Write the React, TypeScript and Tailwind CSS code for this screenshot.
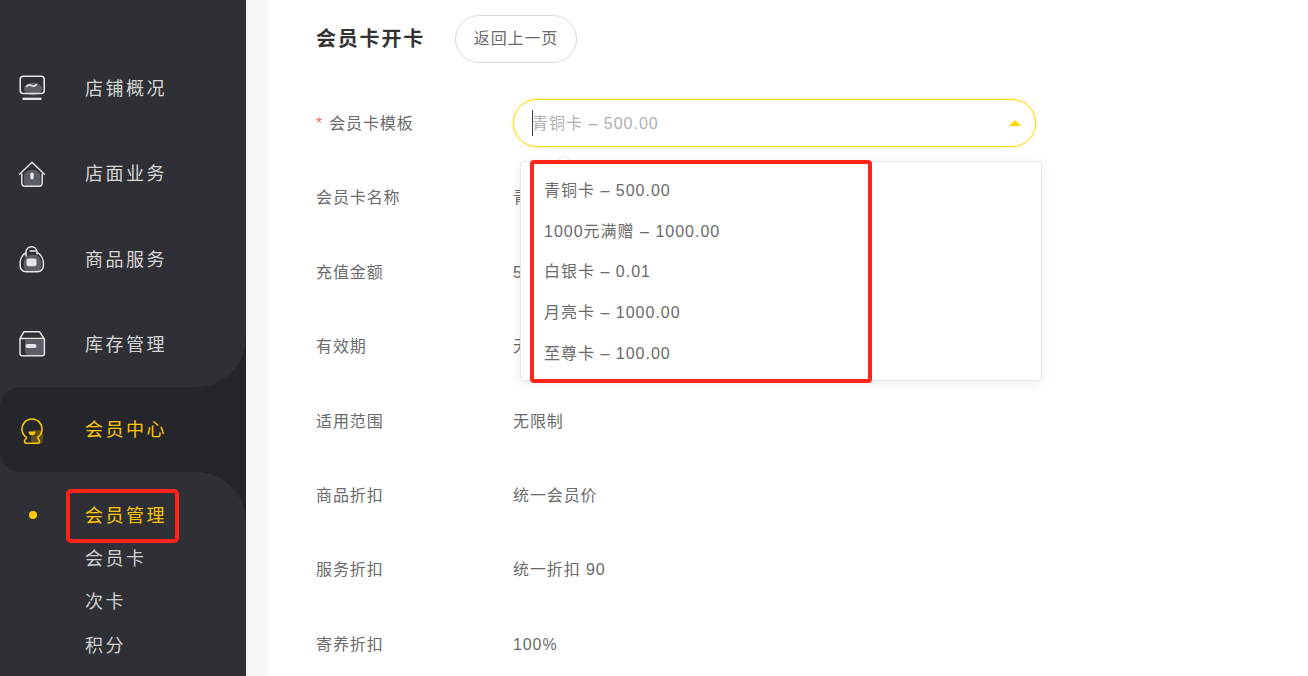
import React from "react";

const FONT = '"Liberation Sans","Noto Sans CJK SC",sans-serif';
const L = "#e4e4e6";
const B = "#5a5e66";

function Ic({ children }: { children: React.ReactNode }) {
  return (
    <svg width="28" height="28" viewBox="0 0 28 28" fill="none" className="shrink-0">
      {children}
    </svg>
  );
}

const icons: React.ReactNode[] = [
  <Ic key="a">
    <ellipse cx="14" cy="14" rx="9" ry="6.500" fill={B} />
    <rect x="1.200" y="1.200" width="24" height="17.300" rx="3" stroke={L} strokeWidth="1.600" />
    <path d="M7.500 11.500q2.200-2.600 4.800-1t5.200-.8" stroke={L} strokeWidth="1.600" strokeLinecap="round" />
    <path d="M3.500 23.800h19" stroke={L} strokeWidth="2.400" />
  </Ic>,
  <Ic key="b">
    <path d="M5 15c1-3 4-5 8-5s8 2 8.500 6v7c0 2-1 3-3 3H9c-3 0-4-2-4-4z" fill={B} />
    <path d="M.500 14.300 13 2.200l12.400 12.100" stroke={L} strokeWidth="1.500" strokeLinecap="round" strokeLinejoin="round" />
    <path d="M2.800 13.500v9c0 2 1.300 3.800 3.300 3.800h13.800c2 0 3.300-1.800 3.300-3.800v-9" stroke={L} strokeWidth="1.500" />
    <rect x="11.300" y="12.500" width="3.400" height="7" rx="1.700" fill={L} />
  </Ic>,
  <Ic key="c">
    <path d="M7 12c3-3 10-3 13 0s3 12 0 14H7c-3-1-3-11 0-14z" fill={B} />
    <path d="M6.500 8C3 10 1 15 1 19c0 5 2.500 7.800 6 7.800h11.500c3.500 0 6-2.800 6-7.800 0-4-2-9-5.500-11" stroke={L} strokeWidth="1.500" strokeLinecap="round" />
    <path d="M7 11V7.500C7 4 9.500 1.800 12.500 1.800S18 4 18 7.500V9M11 6h7" stroke={L} strokeWidth="1.500" strokeLinecap="round" />
    <rect x="7.500" y="13.500" width="10" height="7.800" rx="2" fill={L} />
  </Ic>,
  <Ic key="d">
    <path d="M6 10h19.500v15.500H10q-4-1-4-6z" fill={B} />
    <path d="M5 1.700h15.500L25 8.500H1zM1 8.500v15.500q0 1.700 1.700 1.700h21q1.700 0 1.700-1.700V8.500" stroke={L} strokeWidth="1.500" strokeLinejoin="round" />
    <rect x="6.500" y="14" width="11" height="4" rx="2" fill={L} />
  </Ic>,
  <Ic key="e">
    <rect x="12" y="14" width="12" height="14" rx="4" fill="#5d4c1f" />
    <path d="M7.500 21.300A10 10 0 1 1 18.500 21.300c0 2 2 2 2 4 0 1.500-1 2-2 2h-11c-1 0-2-.5-2-2 0-2 2-2 2-4z" stroke="#fec601" strokeWidth="1.600" strokeLinejoin="round" />
    <path d="M9.500 15.500h7c.3 2-1.500 3.800-3.500 3.800s-3.800-1.800-3.500-3.800z" fill="#fec601" />
  </Ic>,
];

const rows = [
  { name: "店铺概况", icon: 0 },
  { name: "店面业务", icon: 1 },
  { name: "商品服务", icon: 2 },
  { name: "库存管理", icon: 3 },
];

const fields: [string, string][] = [
  ["会员卡名称", "青铜卡"],
  ["充值金额", "500.00"],
  ["有效期", "无限期"],
  ["适用范围", "无限制"],
  ["商品折扣", "统一会员价"],
  ["服务折扣", "统一折扣 90"],
  ["寄养折扣", "100%"],
];

const options = ["青铜卡 – 500.00", "1000元满赠 – 1000.00", "白银卡 – 0.01", "月亮卡 – 1000.00", "至尊卡 – 100.00"];

function Sidebar() {
  return (
    <aside className="w-[246px] h-[676px] shrink-0 bg-[#25262b] flex flex-col overflow-hidden">
      <div className="bg-[#2f3035] rounded-br-[50px] pt-[46px]">
        {rows.map((r) => (
          <div key={r.name} className="h-[85.250px] flex items-center pl-[19px] gap-[38px]">
            {icons[r.icon]}
            <span className="text-[18px] tracking-[2.500px] text-[#d6d6d6] pt-[2px]">{r.name}</span>
          </div>
        ))}
      </div>
      <div className="bg-[#2f3035]">
        <div className="h-[85px] bg-[#25262b] rounded-l-[20px] flex items-center pl-[19px] gap-[38px]">
          {icons[4]}
          <span className="text-[18px] tracking-[2.500px] text-[#fec601] pt-[2px]">会员中心</span>
        </div>
      </div>
      <div className="flex-1 bg-[#2f3035] rounded-tr-[50px] pt-[21px]">
        <div className="h-[43px] flex items-center relative pl-[29px]">
          <span className="w-2 h-2 rounded-full bg-[#fec601]" />
          <span className="ml-[48px] text-[18px] tracking-[2.500px] text-[#fec601] pt-[4px]">会员管理</span>
          <div className="absolute left-[66px] top-[-4px] w-[113px] h-[54px] border-4 border-[#ff2418] rounded-[5px]" />
        </div>
        {["会员卡", "次卡", "积分"].map((t) => (
          <div key={t} className="h-[43.300px] flex items-center pl-[85px] pt-[4px] text-[18px] tracking-[2.500px] text-[#cfcfcf]">
            {t}
          </div>
        ))}
      </div>
    </aside>
  );
}

function Field({ label, value }: { label: string; value: string }) {
  return (
    <div className="h-[74.400px] flex items-center">
      <div className="w-[197px] text-[#6a6a6a]">{label}</div>
      <div className="text-[#6a6a6a]">{value}</div>
    </div>
  );
}

export default function App() {
  return (
    <div className="w-[1308px] h-[676px] flex overflow-hidden bg-[#f7f7f7]" style={{ fontFamily: FONT }}>
      <Sidebar />
      <main className="ml-[22px] flex-1 bg-white pl-[48px] pt-[15px] text-[16px] tracking-[0.9px]">
        <div className="flex items-center h-[48px]">
          <h1 className="text-[20px] font-bold text-[#333] tracking-[1.800px]">会员卡开卡</h1>
          <button className="ml-[30px] w-[122px] h-[48px] rounded-full border border-[#d9d9d9] text-[#6a6a6a] bg-white">
            返回上一页
          </button>
        </div>
        <div className="mt-[36px] h-[48px] flex items-center relative">
          <div className="w-[197px] text-[#6a6a6a] pt-px">
            <span className="text-[#f56c6c] mr-[6px]">*</span>会员卡模板
          </div>
          <div className="w-[523px] h-[48px] rounded-full border border-[#ffd900] shadow-[0_0_3px_rgba(255,217,0,0.5)] flex items-center pl-[18px] pr-[14px] text-[#b0b0b0] tracking-[1px]">
            <span className="w-px h-[26px] bg-[#444] mr-[-1px]" />
            <span className="flex-1 pt-px">青铜卡 – 500.00</span>
            <svg width="12" height="6" viewBox="0 0 12 6"><path d="M6 0l6 6H0z" fill="#ffd900" /></svg>
          </div>
          <div className="absolute left-[204px] top-[62px] z-10 w-[522px] h-[220px] bg-white border border-[#e6e7ec] rounded-[4px] shadow-[0_2px_12px_rgba(0,0,0,0.08)] pt-[8.600px] text-[#6a6a6a] tracking-[1px]">
            <div className="absolute left-[38px] top-[-6px] w-[10px] h-[10px] rotate-45 bg-white border-l border-t border-[#ececf0]" />
            {options.map((o) => (
              <div key={o} className="relative h-[40.700px] flex items-center pl-[23px]">{o}</div>
            ))}
            <div className="absolute left-[9px] top-[-2px] w-[342px] h-[223px] border-4 border-[#ff2418] rounded-[4px]" />
          </div>
        </div>
        <div className="mt-[14.300px]">
          {fields.map(([l, v]) => (
            <Field key={l} label={l} value={v} />
          ))}
        </div>
      </main>
    </div>
  );
}
